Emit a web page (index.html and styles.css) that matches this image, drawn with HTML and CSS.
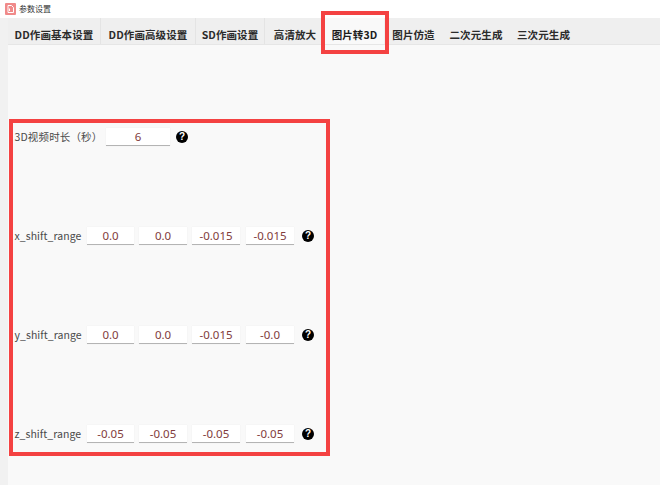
FILE: index.html
```html
<!DOCTYPE html>
<html lang="zh">
<head>
<meta charset="utf-8">
<title>参数设置</title>
<link rel="stylesheet" href="styles.css">
</head>
<body>
<div class="window">
  <header class="titlebar">
    <svg class="appicon" width="11" height="12" viewBox="0 0 11 12"><rect width="11" height="12" rx="1" fill="#f08a8a"/><path d="M3 2.500h3.500L8.500 4.500V9.500H3z" fill="none" stroke="#fff" stroke-width="1"/><path d="M4.500 5.500v2.500" stroke="#fff"/></svg>
    <span class="title">参数设置</span>
  </header>
  <div class="body">
    <nav class="tabs">
      <span class="tab t1">DD作画基本设置</span>
      <span class="tab t2">DD作画高级设置</span>
      <span class="tab t3">SD作画设置</span>
      <span class="tab t4">高清放大</span>
      <span class="tab t5 active">图片转3D</span>
      <span class="tab t6">图片仿造</span>
      <span class="tab t7">二次元生成</span>
      <span class="tab t8">三次元生成</span>
    </nav>
    <main class="panel">
      <div class="row">
        <label class="label wide">3D视频时长（秒）</label>
        <span class="field single">6</span>
        <span class="help">?</span>
      </div>
      <div class="row">
        <label class="label">x_shift_range</label>
        <span class="field f1">0.0</span><span class="field f2">0.0</span><span class="field f3">-0.015</span><span class="field f4">-0.015</span>
        <span class="help">?</span>
      </div>
      <div class="row">
        <label class="label">y_shift_range</label>
        <span class="field f1">0.0</span><span class="field f2">0.0</span><span class="field f3">-0.015</span><span class="field f4">-0.0</span>
        <span class="help">?</span>
      </div>
      <div class="row">
        <label class="label">z_shift_range</label>
        <span class="field f1">-0.05</span><span class="field f2">-0.05</span><span class="field f3">-0.05</span><span class="field f4">-0.05</span>
        <span class="help">?</span>
      </div>
    </main>
  </div>
  <div class="mark mark-tab"></div>
  <div class="mark mark-form"></div>
</div>
</body>
</html>
```
FILE: styles.css
```css
* { box-sizing: border-box; }
html, body { margin: 0; padding: 0; }
body { width: 660px; height: 485px; overflow: hidden; background: #f8f8f8; font-family: "Noto Sans CJK SC", "Noto Sans", sans-serif; }
.window { position: relative; width: 660px; height: 485px; display: flex; flex-direction: column; overflow: hidden; }
.titlebar { height: 18px; flex: none; background: #fff; display: flex; align-items: center; gap: 3px; padding-left: 5px; }
.appicon { flex: none; }
.title { font-size: 8px; line-height: 12px; color: #333; }
.body { flex: 1; min-height: 0; margin-left: 8px; display: flex; flex-direction: column; background: #f9f9f9; box-shadow: -8px 0 0 #f1f1f1; }
.tabs { height: 27px; flex: none; display: flex; background: #efefef; border-bottom: 1px solid #e6e6e6; }
.tab { height: 26px; padding-top: 8px; display: block; font-size: 10.500px; line-height: 17px; font-weight: 700; color: #2b2b2b; white-space: nowrap; text-align: center; letter-spacing: 0.1px; border-right: 1px solid #e4e4e4; }
.t1 { width: 93px; }
.t2 { width: 95px; }
.t3 { width: 69px; }
.t4 { width: 60px; border: 0; }
.t5 { width: 59px; border: 0; }
.t6 { width: 59px; border: 0; }
.t7 { width: 66px; border: 0; }
.t8 { width: 69px; border: 0; }
.tab.active { background: #f9f9f9; color: #1d1d1d; }
.panel { flex: 1; min-height: 0; display: flex; flex-direction: column; gap: 69px; padding: 77px 0 0 6.500px; }
.row { height: 30px; flex: none; display: flex; align-items: center; }
.label { font-size: 10.500px; line-height: 16px; color: #4a4a4a; width: 72.500px; flex: none; white-space: nowrap; letter-spacing: 0.05px; }
.label.wide { width: 91.500px; letter-spacing: 0.15px; }
.field { height: 18px; background: #fff; border-bottom: 1px solid #b4b4b4; font-size: 11.500px; line-height: 17px; text-align: center; color: #823c3c; flex: none; box-shadow: 0 0 1px #e6e6e6; font-family: "Noto Sans", sans-serif; }
.single { width: 64px; margin-right: 6px; }
.f1 { width: 47px; margin-right: 5px; }
.f2 { width: 48px; margin-right: 5px; }
.f3 { width: 48px; margin-right: 6px; }
.f4 { width: 48px; margin-right: 8px; }
.help { width: 12px; height: 12px; border-radius: 50%; background: #000; color: #fff; font-family: "Liberation Sans", sans-serif; font-size: 10px; line-height: 12px; font-weight: 700; text-align: center; flex: none; }
.mark { position: absolute; border: 4px solid #f44242; pointer-events: none; }
.mark-tab { left: 321px; top: 11px; width: 68px; height: 43px; }
.mark-form { left: 9px; top: 119px; width: 321px; height: 337px; }
```
